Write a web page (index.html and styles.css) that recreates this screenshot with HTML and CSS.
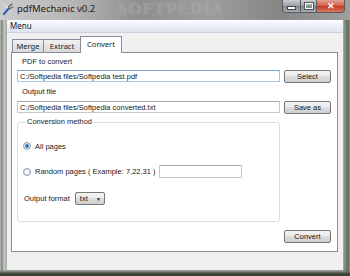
FILE: index.html
```html
<!DOCTYPE html>
<html lang="en">
<head>
    <meta charset="UTF-8">
    <title>pdfMechanic v0.2</title>
    <link rel="stylesheet" href="styles.css">
</head>
<body>
    <div class="window">
        <div class="titlebar">
            <svg class="app-icon" width="11" height="12" viewBox="0 0 11 12">
                <path d="M1 11 L6 5" stroke="#2a5fb0" stroke-width="2" stroke-linecap="round"/>
                <path d="M5 4 L9 1 M6 6 L10 4" stroke="#5a6470" stroke-width="1.2" stroke-linecap="round"/>
                <path d="M2 2 L5 5" stroke="#e8e8e8" stroke-width="1.5"/>
            </svg>
            <span class="title">pdfMechanic v0.2</span>
            <span class="watermark">SOFTPEDIA</span>
            <div class="caption">
                <span class="cap cap-min"><i></i></span>
                <span class="cap cap-max"><i></i></span>
                <span class="cap cap-close">&#x2715;</span>
            </div>
        </div>
        <div class="frame">
            <div class="client">
                <div class="menubar"><span>Menu</span></div>
                <div class="tabs-area">
                    <div class="tabs">
                        <span class="tab">Merge</span>
                        <span class="tab">Extract</span>
                        <span class="tab active">Convert</span>
                    </div>
                    <div class="pane">
                        <div class="label">PDF to convert</div>
                        <div class="row">
                            <input class="field focus" type="text" value="C:/Softpedia files/Softpedia test.pdf">
                            <button>Select</button>
                        </div>
                        <div class="label">Output file</div>
                        <div class="row">
                            <input class="field" type="text" value="C:/Softpedia files/Softpedia converted.txt">
                            <button>Save as</button>
                        </div>
                        <div class="row">
                            <fieldset class="group">
                                <legend>Conversion method</legend>
                                <div class="opt">
                                    <span class="radio checked"></span>
                                    <span>All pages</span>
                                </div>
                                <div class="opt">
                                    <span class="radio"></span>
                                    <span>Random pages ( Example: 7,22,31 )</span>
                                    <input class="field pages" type="text">
                                </div>
                                <div class="opt fmt">
                                    <span>Output format</span>
                                    <span class="combo">txt <b>&#x25BC;</b></span>
                                </div>
                            </fieldset>
                        </div>
                        <div class="row bottom">
                            <span></span>
                            <button>Convert</button>
                        </div>
                    </div>
                </div>
            </div>
        </div>
    </div>
</body>
</html>
```

FILE: styles.css
```css
body {
    margin: 0;
    padding: 0;
    width: 350px;
    height: 276px;
    overflow: hidden;
    font-family: 'Liberation Sans', 'Noto Sans', sans-serif;
    font-size: 7.5px;
    color: #1a1a1a;
    background-color: #8e978c;
}
.window {
    width: 350px;
    height: 276px;
    display: flex;
    flex-direction: column;
    background: linear-gradient(to right, #b9bdb8 0, #7c827a 2px, #c9ccc8 4px, #aab0a8 6px, #aab0a8 343px, #7d8a78 345px, #5e6d5a 348px, #8a9886 350px);
}
.titlebar {
    height: 20px;
    position: relative;
    display: flex;
    align-items: flex-start;
    background: linear-gradient(to right, #cbcbcb 0, #b7b7b7 20%, #8f8f8f 40%, #9d9d9d 60%, #868686 80%, #9f9f9f 100%);
    overflow: hidden;
}
.app-icon {
    margin: 3px 0 0 3px;
}
.title {
    margin: 2px 0 0 3px;
    font-family: 'Noto Sans', sans-serif;
    font-size: 9.5px;
    color: #222;
    z-index: 1;
}
.watermark {
    position: absolute;
    left: 118px;
    top: 0;
    font-family: 'Liberation Serif', serif;
    font-weight: bold;
    font-size: 17px;
    line-height: 18px;
    letter-spacing: 1px;
    color: rgba(120, 120, 120, 0.35);
    text-shadow: 0 0 1px rgba(220, 220, 220, 0.5);
}
.caption {
    margin-left: auto;
    margin-right: 5px;
    display: flex;
    z-index: 1;
}
.cap {
    height: 13px;
    border: 1px solid #5b5b5b;
    border-top: none;
    box-sizing: border-box;
    display: flex;
    align-items: center;
    justify-content: center;
    background: linear-gradient(#c9cdd2, #9aa0a8 50%, #7f858d 51%, #a7adb5);
}
.cap-min {
    width: 18px;
    border-radius: 0 0 0 4px;
    border-right: none;
}
.cap-min i {
    width: 7px;
    height: 2px;
    margin-top: 4px;
    background: #fff;
    border: 1px solid #444;
}
.cap-max {
    width: 16px;
    border-right: none;
}
.cap-max i {
    width: 6px;
    height: 4px;
    border: 1px solid #fff;
    outline: 1px solid #555;
}
.cap-close {
    width: 29px;
    border-radius: 0 0 4px 0;
    color: #fff;
    font-size: 9px;
    font-weight: bold;
    background: linear-gradient(#e5a092, #d35b47 50%, #c2361f 51%, #d87a5f);
}
.frame {
    flex: 1;
    padding: 0 7px 6px 7px;
    display: flex;
    background: linear-gradient(to bottom, transparent 250px, #6b7368 252px, #3a4038 254px);
}
.client {
    flex: 1;
    background-color: #f0f0f0;
    display: flex;
    flex-direction: column;
}
.menubar {
    height: 13px;
    line-height: 12px;
    padding-left: 3px;
    background: linear-gradient(#fbfcfe, #e9eef7 60%, #dde4f1);
    border-bottom: 1px solid #c9d0dd;
    box-sizing: border-box;
    font-family: 'Noto Sans', sans-serif;
    font-size: 8px;
}
.tabs-area {
    flex: 1;
    padding: 3px 5px 18px 4px;
    display: flex;
    flex-direction: column;
}
.tabs {
    display: flex;
    align-items: flex-end;
    padding-left: 1px;
    height: 16px;
    font-family: 'Noto Sans', sans-serif;
    font-size: 7.5px;
}
.tab {
    height: 13px;
    line-height: 13px;
    box-sizing: border-box;
    border: 1px solid #898c95;
    border-bottom: none;
    border-right: none;
    background: linear-gradient(#f3f3f3, #e4e4e4 50%, #dadada);
    text-align: center;
}
.tab:nth-child(1) { width: 31px; }
.tab:nth-child(2) { width: 37px; }
.tab.active {
    width: 42px;
    height: 17px;
    line-height: 15px;
    background: #fff;
    border-right: 1px solid #898c95;
    margin-bottom: -1px;
    position: relative;
    z-index: 1;
}
.pane {
    flex: 1;
    background: #fff;
    border: 1px solid #898c95;
    padding: 3px 6px 8px 5px;
    display: flex;
    flex-direction: column;
}
.label {
    height: 12px;
    line-height: 12px;
    padding-left: 5px;
    margin-bottom: 2px;
}
.label + .row + .label {
    margin-top: 3px;
    margin-bottom: 3px;
}
.row {
    display: grid;
    grid-template-columns: 263px 47px;
    column-gap: 4px;
    align-items: start;
}
.field {
    height: 12px;
    box-sizing: border-box;
    border: 1px solid #c5c9cf;
    border-top-color: #a7abb1;
    padding: 0 2px;
    margin: 0;
    font-family: inherit;
    font-size: 7.5px;
    color: #1a1a1a;
    background: #fff;
    outline: none;
}
.field.focus {
    border-color: #a6c6e4;
    border-top-color: #7ea7cf;
}
button {
    height: 13px;
    padding: 0;
    font-family: inherit;
    font-size: 7.5px;
    color: #1a1a1a;
    border: 1px solid #767676;
    border-radius: 2px;
    background: linear-gradient(#f4f4f4, #ebebeb 45%, #dddddd 50%, #cfcfcf);
}
.group {
    margin: 2px 0 0 0;
    padding: 13px 0 16px 5px;
    border: 1px solid #dadde2;
    border-radius: 3px;
    height: 106px;
    box-sizing: border-box;
    display: flex;
    flex-direction: column;
    gap: 14px;
}
.group legend {
    padding: 0 1px;
    margin-left: 3px;
    line-height: 12px;
}
.opt {
    height: 13px;
    display: flex;
    align-items: center;
    gap: 4px;
}
.radio {
    width: 8px;
    height: 8px;
    box-sizing: border-box;
    border-radius: 50%;
    border: 1px solid #8e9aa8;
    background: radial-gradient(#ffffff, #d8dde4);
}
.radio.checked {
    background: radial-gradient(#2f6fb9 0, #4d88c9 40%, #e5ecf4 55%);
}
.pages {
    width: 83px;
    height: 13px;
}
.fmt {
    padding-left: 1px;
    gap: 5px;
}
.combo {
    width: 30px;
    height: 13px;
    box-sizing: border-box;
    border: 1px solid #767676;
    border-radius: 2px;
    background: linear-gradient(#f4f4f4, #ebebeb 45%, #dddddd 50%, #cfcfcf);
    display: flex;
    align-items: center;
    padding-left: 4px;
}
.combo b {
    margin-left: auto;
    margin-right: 3px;
    font-size: 5px;
}
.bottom {
    margin-top: auto;
}
```
